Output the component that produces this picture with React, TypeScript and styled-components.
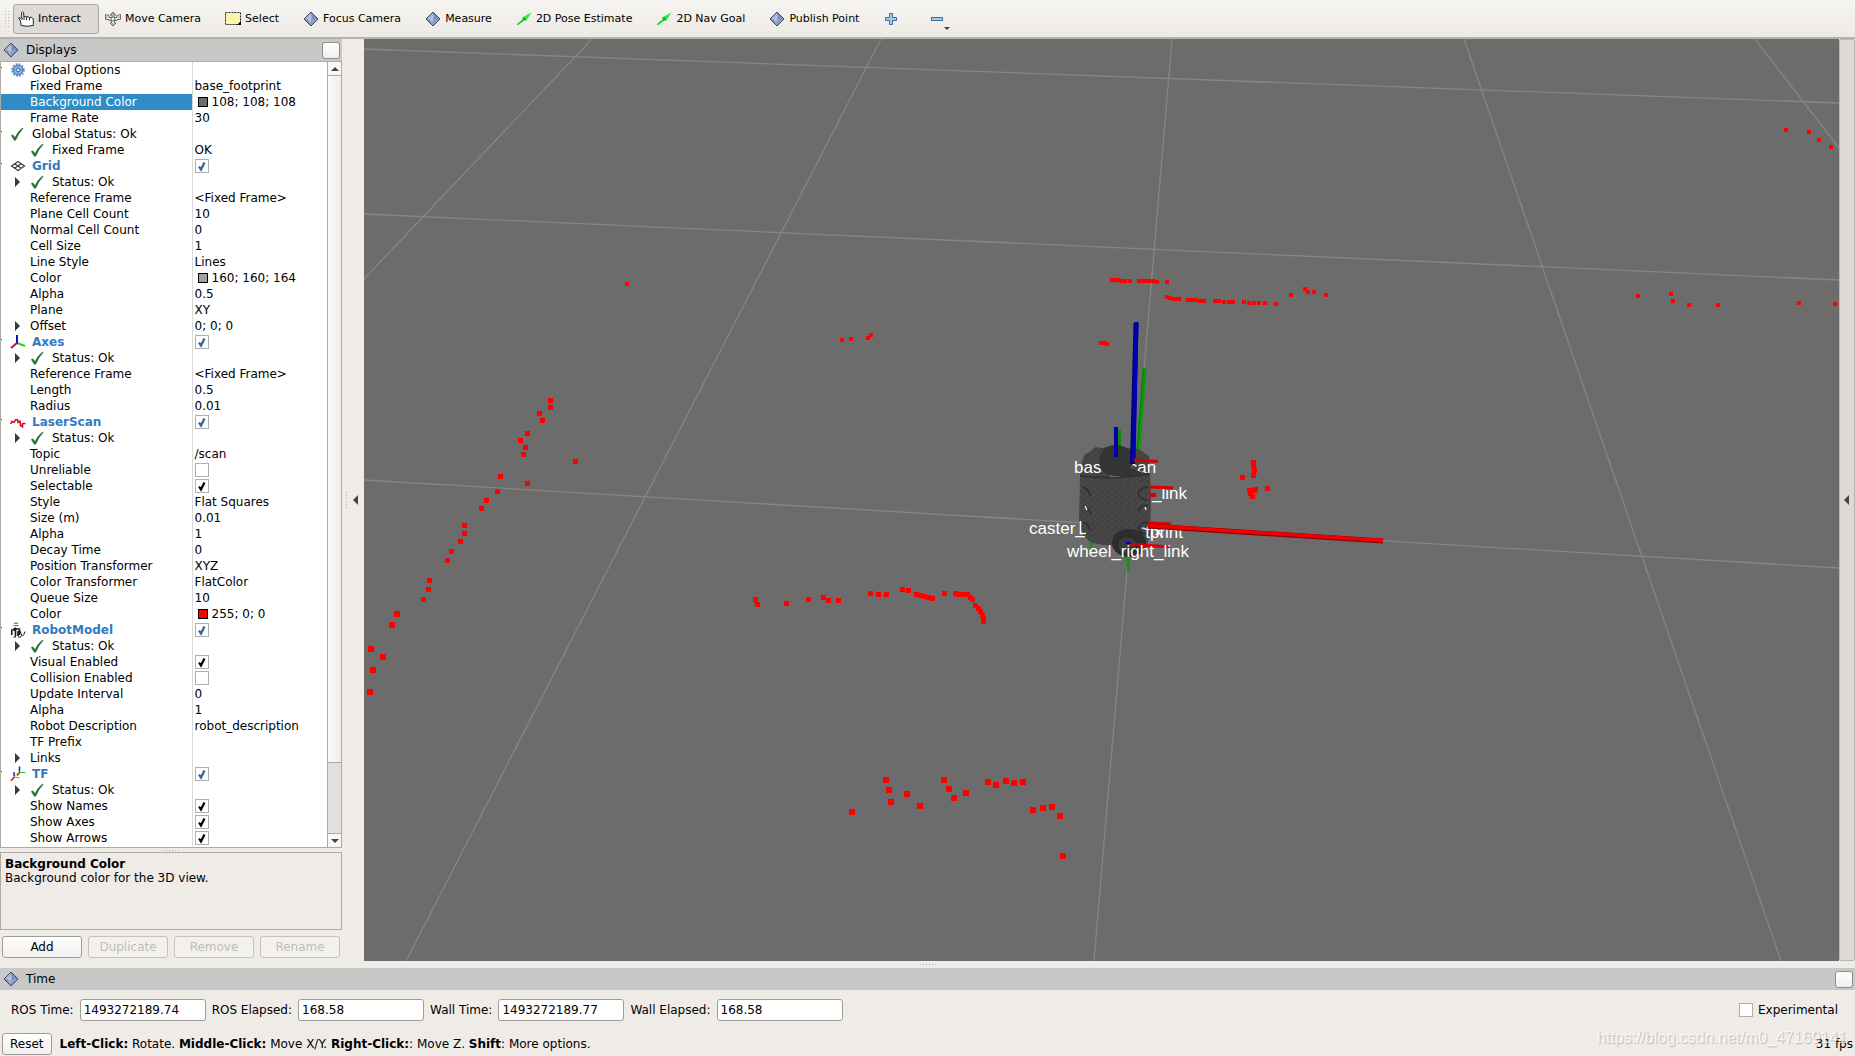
import React, { useState } from "react";
import styled, { createGlobalStyle } from "styled-components";

const UI_FONT = '"DejaVu Sans", "Noto Sans", sans-serif';
const LABEL_FONT = '"Liberation Sans", Arial, sans-serif';

const GlobalStyle = createGlobalStyle`
  *, *::before, *::after { box-sizing: border-box; }
  body { margin: 0; background: #efebe7; }
`;

const Window = styled.div`
  display: flex;
  flex-direction: column;
  height: 100vh;
  overflow: hidden;
  position: relative;
  background: #efece7;
  color: #000;
  font: 12px/16px ${UI_FONT};
`;

/* ---------- toolbar ---------- */

const Toolbar = styled.header`
  display: flex;
  align-items: center;
  gap: 1px;
  height: 39px;
  padding: 1px 4px 0;
  flex: none;
  background: linear-gradient(#f7f5f2, #edeae5);
  border-bottom: 2px solid #b4b2ae;
`;

const Grip = styled.span<{ $w: number; $h: number }>`
  width: ${(p) => p.$w}px;
  height: ${(p) => p.$h}px;
  flex: none;
  background-image: radial-gradient(circle, #b5b2ae 0 1px, transparent 1px);
  background-size: 3px 3px;
`;

const Tool = styled.button<{ $active?: boolean; $wide?: boolean }>`
  display: flex;
  align-items: center;
  gap: 4px;
  height: 30px;
  padding: 0 ${(p) => (p.$wide ? 23 : 17)}px 0 4px;
  border: 1px solid ${(p) => (p.$active ? "#a9a6a2" : "transparent")};
  border-radius: 3px;
  background: ${(p) => (p.$active ? "#dcd9d6" : "none")};
  color: #000;
  font: 11px/16px ${UI_FONT};
  white-space: nowrap;
`;

const ToolGrip = styled.span`
  display: flex;
  width: 8px;
`;

const MinusIcon = styled.span`
  position: relative;
  display: flex;
  svg + svg {
    position: absolute;
    left: 15px;
    top: 16px;
  }
`;

/* ---------- docks ---------- */

const Main = styled.div`
  display: flex;
  flex: 1;
  min-height: 0;
`;

const Dock = styled.aside`
  display: flex;
  flex-direction: column;
  width: 342px;
  flex: none;
  padding-bottom: 3px;
`;

const DockHeader = styled.div`
  display: flex;
  align-items: center;
  gap: 7px;
  height: 22px;
  flex: none;
  padding: 0 2px 0 3px;
  background: #c8c8c8;
`;

const DockTitle = styled.h2`
  flex: 1;
  margin: 0;
  font: inherit;
`;

const DockButton = styled.button`
  width: 18px;
  height: 17px;
  padding: 0;
  border: 1px solid #8f8d8a;
  border-radius: 3px;
  background: linear-gradient(#fff, #f1efed);
`;

const TreeFrame = styled.div`
  display: flex;
  flex: 1;
  min-height: 0;
  overflow: hidden;
  border: 1px solid #aeaba7;
  background: #fff;
`;

const Tree = styled.table`
  flex: 1;
  align-self: flex-start;
  table-layout: fixed;
  border-collapse: collapse;
  width: 325px;
`;

const NameCell = styled.th<{ $selected?: boolean; $group?: boolean }>`
  width: 191px;
  height: 16px;
  padding: 0;
  text-align: left;
  white-space: nowrap;
  border-right: 1px solid #d9d9d9;
  font-weight: ${(p) => (p.$group ? 700 : 400)};
  color: ${(p) => (p.$selected ? "#fff" : p.$group ? "#307bc0" : "#000")};
  background: ${(p) => (p.$selected ? "#308cc6" : "#fff")};
`;

const ValueCell = styled.td`
  height: 16px;
  padding: 0 0 0 2px;
  white-space: nowrap;
`;

const NameRow = styled.div<{ $kind: Kind }>`
  display: flex;
  align-items: center;
  height: 16px;
  padding-left: ${(p) => (p.$kind === "top" ? 0 : 12)}px;
`;

const Branch = styled.span<{ $top?: boolean }>`
  display: flex;
  width: ${(p) => (p.$top ? 9 : 17)}px;
  flex: none;
`;

const IconSlot = styled.span`
  display: flex;
  width: 22px;
  flex: none;
`;

const Swatch = styled.span<{ $color: string }>`
  display: inline-block;
  width: 10px;
  height: 10px;
  margin: 0 4px 0 3px;
  vertical-align: -1px;
  border: 1px solid #000;
  background: ${(p) => p.$color};
`;

const TickLabel = styled.label`
  display: grid;
  width: max-content;
  align-items: center;
  & > * {
    grid-area: 1 / 1;
  }
  svg {
    pointer-events: none;
  }
`;

const TickBox = styled.input`
  appearance: none;
  width: 14px;
  height: 14px;
  margin: 0;
  border: 1px solid #b1afac;
  background: #fff;
`;

const ScrollBar = styled.div`
  display: flex;
  flex-direction: column;
  width: 14px;
  flex: none;
  border-left: 1px solid #aeaba7;
  background: #e2e1df;
`;

const ScrollButton = styled.button<{ $down?: boolean }>`
  display: grid;
  place-items: center;
  height: 14px;
  flex: none;
  padding: 0;
  border: 0;
  border-${(p) => (p.$down ? "top" : "bottom")}: 1px solid #aeaba7;
  background: #f8f7f6;
`;

const Thumb = styled.div`
  flex: 687;
  border-bottom: 1px solid #aeaba7;
  background: linear-gradient(90deg, #fcfbfb, #f0eeeb);
`;

const Trough = styled.div`
  flex: 70;
`;

const Splitter = styled.div<{ $h: number }>`
  display: flex;
  justify-content: center;
  align-items: center;
  height: ${(p) => p.$h}px;
  flex: none;
`;

const Description = styled.section`
  height: 78px;
  flex: none;
  padding: 4px;
  border: 1px solid #aeaba7;
  line-height: 14px;
  p { margin: 0; }
`;

const ButtonRow = styled.div`
  display: grid;
  grid-template-columns: repeat(4, 1fr);
  gap: 6px;
  padding: 6px 2px 0;
`;

const PushButton = styled.button`
  height: 22px;
  padding: 0 7px;
  border: 1px solid #a09d99;
  border-radius: 3px;
  background: linear-gradient(#fff, #f2f0ee);
  color: #000;
  font: inherit;
  &:disabled {
    border-color: #c5c2be;
    background: #f3f1ee;
    color: #bebcb9;
  }
`;

const Gutter = styled.div`
  display: flex;
  align-items: center;
  gap: 5px;
  width: 22px;
  flex: none;
  padding-left: 3px;
`;

const Collapse = styled.button`
  padding: 0;
  border: 0;
  background: none;
  display: flex;
`;

const RightStrip = styled.button`
  display: flex;
  align-items: center;
  justify-content: center;
  width: 16px;
  flex: none;
  padding: 0 2px 0 0;
  border: 1px solid #b9b6b2;
  border-radius: 2px;
  background: #dcd9d6;
`;

const View = styled.main`
  flex: 1;
  min-width: 0;
  background: #6c6c6c;
  svg {
    display: block;
    width: 100%;
    height: 100%;
  }
`;

const SceneLabel = styled.text`
  font: 17px ${LABEL_FONT};
  fill: #fff;
`;

/* ---------- bottom ---------- */

const TimeRow = styled.div`
  display: flex;
  align-items: center;
  gap: 6px;
  padding: 9px 17px 12px 11px;
  flex: none;
`;

const TimeField = styled.input`
  width: 126px;
  height: 22px;
  padding: 0 3px;
  border: 1px solid #a09d99;
  border-radius: 3px;
  background: #fff;
  font: inherit;
`;

const Experimental = styled.label`
  display: flex;
  align-items: center;
  gap: 5px;
  margin-left: auto;
`;

const StatusRow = styled.footer`
  display: flex;
  align-items: center;
  gap: 8px;
  padding: 0 2px 1px;
  flex: none;
`;

const Fps = styled.span`
  margin-left: auto;
`;

const Watermark = styled.span`
  position: absolute;
  right: 8px;
  bottom: 9px;
  font: 16px/18px ${LABEL_FONT};
  color: rgba(255, 255, 255, 0.75);
  text-shadow: 1px 1px 1px rgba(0, 0, 0, 0.22);
  pointer-events: none;
`;

/* ---------- icons ---------- */

const Diamond = () => (
  <svg width="16" height="16" viewBox="0 0 16 16">
    <path d="M8 1 L15 8 L8 15 L1 8Z" fill="#8fa0c6" />
    <path d="M8 1 L8 8 L1 8Z" fill="#a9b7d6" />
    <path d="M8 1 L15 8 L8 8Z" fill="#7c8db6" />
    <path d="M1 8 L8 15 L6 9Z" fill="#8193be" />
    <path d="M5 7 L9 4 L8 10 L6 12Z" fill="#c0cbe2" opacity="0.7" />
    <path d="M8 1 L15 8 L8 15 L1 8Z" fill="none" stroke="#3b4668" />
  </svg>
);

const Hand = () => (
  <svg width="16" height="16" viewBox="0 0 16 16">
    <path
      d="M3 14.5 L2.5 10 L.6 7 Q1 5.800 2.500 7 L4 8.500 L3.500 1.500 Q4.500 0 5.500 1.500 L6 6 Q7 4.800 8.500 6 Q10 5 11.500 6.500 Q13 5.500 14.500 7 L15.300 8 L15.300 14.500 Q9 16 3 14.500Z"
      fill="#fff"
      stroke="#222"
    />
    <path d="M8.500 6v3M11.500 6.500v3M6 6v3" stroke="#222" />
  </svg>
);

const Move = () => (
  <svg width="16" height="16" viewBox="0 0 16 16" fill="#f4f2ef" stroke="#4b4b4b">
    <path d="M8 1 L11 4 H9V6.500 H12V4.500 L15.500 3.500 V8.500 L12 8.500 V9.500 H9.500V12 H11 L8 15 L5 12 H6.500V9.500 H4V8.500 L.5 8.500V3.500 L4 4.500 V6.500 H7V4 H5Z" strokeWidth="0.8" />
    <circle cx="8" cy="8" r="2" strokeWidth="0.8" />
    <path d="M2 5.500v1.500M14 5.500v1.500M7 13h2M7 3h2" strokeWidth="0.8" />
  </svg>
);

const SelectIcon = () => (
  <svg width="16" height="16" viewBox="0 0 16 16">
    <rect x="0.500" y="1.500" width="15" height="12" fill="#fbf3b0" stroke="#222" strokeDasharray="2 1" />
    <path d="M16 10v4h-4z" fill="#000" />
  </svg>
);

const GreenArrow = () => (
  <svg width="16" height="16" viewBox="0 0 16 16">
    <path d="M.5 13.500 L7 7.500 L6 6.500 L15.500 1.500 L10 10 L8.800 9 L2 14Z" fill="#1ff03c" />
    <path d="M1 13.500 L8 7.800 L9 9 L2 14Z" fill="#0fae26" opacity="0.5" />
    <path d="M6 6.500 L9 7 L10 10Z" fill="#0b8f20" />
  </svg>
);

const Plus = () => (
  <svg width="16" height="16" viewBox="0 0 16 16">
    <path d="M6.500 2.500h3v4h4v3h-4v4h-3v-4h-4v-3h4z" fill="#a8c8ec" stroke="#3d6ba8" />
  </svg>
);

const Minus = () => (
  <svg width="16" height="16" viewBox="0 0 16 16">
    <rect x="2.500" y="6.500" width="11" height="3" fill="#a8c8ec" stroke="#3d6ba8" />
  </svg>
);

const ArrowTri = ({ dir, size = 4 }: { dir: "up" | "down" | "left" | "right"; size?: number }) => {
  const s = size;
  const shape = {
    up: `0,${s} ${2 * s},${s} ${s},0`,
    down: `0,0 ${2 * s},0 ${s},${s}`,
    left: `${s},0 ${s},${2 * s} 0,${s}`,
    right: `0,0 0,${2 * s} ${s},${s}`,
  }[dir];
  const flat = dir === "up" || dir === "down";
  return (
    <svg width={flat ? 2 * s : s} height={flat ? s : 2 * s}>
      <polygon points={shape} fill="#444" />
    </svg>
  );
};

const Expander = () => (
  <svg width="17" height="16">
    <polygon points="2,3 2,13 7,8" fill="#3a3a3a" />
  </svg>
);

const Check = () => (
  <svg width="14" height="14" viewBox="0 0 14 14">
    <path d="M1 8.500 L2.800 7.500 L5 10.200 Q8 4 12.800 0.800 L13.500 1.300 Q8.800 6.500 5.800 13.500 L4.200 13.500Z" fill="#237532" />
  </svg>
);

const Gear = () => (
  <svg width="16" height="16" viewBox="0 0 16 16">
    <circle cx="8" cy="8" r="5.500" fill="none" stroke="#5e8dc9" strokeWidth="2.500" strokeDasharray="1.700 1.180" />
    <circle cx="8" cy="8" r="4.800" fill="#8fb4e3" stroke="#4674b2" />
    <circle cx="8" cy="8" r="1.800" fill="#d5e4f6" stroke="#3f6cab" />
    <path d="M8 3.500v2M8 10.500v2M3.500 8h2M10.500 8h2" stroke="#5b88c2" />
  </svg>
);

const GridIcon = () => (
  <svg width="16" height="16" viewBox="0 0 16 16" fill="none" stroke="#3c3c3c" strokeWidth="1.200">
    <path d="M8 3.500 L14.500 8 L8 12.500 L1.500 8Z M4.700 5.800 L11.200 10.300 M11.200 5.800 L4.700 10.300" />
  </svg>
);

const AxesIcon = () => (
  <svg width="16" height="16" viewBox="0 0 16 16" strokeWidth="2">
    <path d="M7 9 L15 12" stroke="#24d624" />
    <path d="M7 9 L1 14" stroke="#c8102e" />
    <path d="M7 1 V9.500" stroke="#1010c0" />
  </svg>
);

const LaserIcon = () => (
  <svg width="16" height="16" viewBox="0 0 16 16">
    <path d="M.8 10 L1.800 7.500 L4.200 8.300 L5.500 5.800 L7.500 5.800 L8 8.200 L10 7.200 L10.500 11.500 L12.500 12.800 L12.500 9.800 L15.500 9.500" fill="none" stroke="#d90f14" strokeWidth="1.600" />
  </svg>
);

const RobotIcon = () => (
  <svg width="16" height="16" viewBox="0 0 16 16" fill="none" stroke="#1d1d1d">
    <path d="M3.500 3.500h5M4 1.300h4" stroke="#5b5f70" />
    <path d="M1.800 7v6M4 6v3M5.500 5.500v9M5.500 7h4v6M8 9v5" strokeWidth="1.600" />
    <path d="M10 9l2 5M12 14.500q2-1 3-5M3.500 15h2.500M8 15h3" />
  </svg>
);

const TfIcon = () => (
  <svg width="16" height="16" viewBox="0 0 16 16" fill="none" strokeWidth="1.500">
    <path d="M4.500 11 L.8 14.800 M10 6 L7 9.500" stroke="#d01020" />
    <path d="M4 6 V10.500 M9.500 0.500 V5.500" stroke="#2020b0" />
    <path d="M10 6.500 L15.500 6.500 M4.500 11 L9.500 12" stroke="#28c828" strokeWidth="1.200" />
    <path d="M9 5 L5 10" stroke="#d8c020" strokeWidth="0.800" />
  </svg>
);

/* ---------- property tree data ---------- */

type Kind = "top" | "status" | "prop";

interface Row {
  kind: Kind;
  name: string;
  icon?: React.ReactNode;
  group?: boolean;
  expand?: boolean;
  selected?: boolean;
  value?: string;
  swatch?: string;
  check?: boolean;
}

const prop = (name: string, value?: string | boolean, extra: Partial<Row> = {}): Row => ({
  kind: "prop",
  name,
  ...(typeof value === "boolean" ? { check: value } : { value }),
  ...extra,
});
const group = (name: string, icon: React.ReactNode): Row => ({ kind: "top", name, icon, group: true, check: true });
const statusOk: Row = { kind: "status", name: "Status: Ok", icon: <Check />, expand: true };

const rows: Row[] = [
  { kind: "top", name: "Global Options", icon: <Gear /> },
  prop("Fixed Frame", "base_footprint"),
  prop("Background Color", "108; 108; 108", { swatch: "#6c6c6c", selected: true }),
  prop("Frame Rate", "30"),
  { kind: "top", name: "Global Status: Ok", icon: <Check /> },
  { kind: "status", name: "Fixed Frame", icon: <Check />, value: "OK" },
  group("Grid", <GridIcon />),
  statusOk,
  prop("Reference Frame", "<Fixed Frame>"),
  prop("Plane Cell Count", "10"),
  prop("Normal Cell Count", "0"),
  prop("Cell Size", "1"),
  prop("Line Style", "Lines"),
  prop("Color", "160; 160; 164", { swatch: "#a0a0a4" }),
  prop("Alpha", "0.5"),
  prop("Plane", "XY"),
  prop("Offset", "0; 0; 0", { expand: true }),
  group("Axes", <AxesIcon />),
  statusOk,
  prop("Reference Frame", "<Fixed Frame>"),
  prop("Length", "0.5"),
  prop("Radius", "0.01"),
  group("LaserScan", <LaserIcon />),
  statusOk,
  prop("Topic", "/scan"),
  prop("Unreliable", false),
  prop("Selectable", true),
  prop("Style", "Flat Squares"),
  prop("Size (m)", "0.01"),
  prop("Alpha", "1"),
  prop("Decay Time", "0"),
  prop("Position Transformer", "XYZ"),
  prop("Color Transformer", "FlatColor"),
  prop("Queue Size", "10"),
  prop("Color", "255; 0; 0", { swatch: "#ff0000" }),
  group("RobotModel", <RobotIcon />),
  statusOk,
  prop("Visual Enabled", true),
  prop("Collision Enabled", false),
  prop("Update Interval", "0"),
  prop("Alpha", "1"),
  prop("Robot Description", "robot_description"),
  prop("TF Prefix"),
  prop("Links", undefined, { expand: true }),
  group("TF", <TfIcon />),
  statusOk,
  prop("Show Names", true),
  prop("Show Axes", true),
  prop("Show Arrows", true),
];

const Tick = ({ on, blue, label }: { on: boolean; blue?: boolean; label: string }) => {
  const [checked, setChecked] = useState(on);
  return (
    <TickLabel>
      <TickBox type="checkbox" aria-label={label} checked={checked} onChange={() => setChecked(!checked)} />
      {checked && (
        <svg width="14" height="14" viewBox="0 0 14 14">
          <path d="M4 7.500 L6 10.500 L9.500 3.500" fill="none" stroke={blue ? "#2c5f9e" : "#000"} strokeWidth="2.200" />
        </svg>
      )}
    </TickLabel>
  );
};

const TreeRow = ({ row }: { row: Row }) => (
  <tr>
    <NameCell scope="row" $selected={row.selected} $group={row.group}>
      <NameRow $kind={row.kind}>
        <Branch $top={row.kind === "top"}>
          {row.expand && <Expander />}
          {row.kind === "top" && (
            <svg width="9" height="16">
              <rect x="0" y="5" width="1" height="1" fill="#333" />
            </svg>
          )}
        </Branch>
        {row.icon && <IconSlot>{row.icon}</IconSlot>}
        {row.name}
      </NameRow>
    </NameCell>
    <ValueCell>
      {row.check !== undefined && <Tick on={row.check} blue={row.group} label={row.name} />}
      {row.swatch && <Swatch $color={row.swatch} />}
      {row.value}
    </ValueCell>
  </tr>
);

/* ---------- 3D scene ---------- */

const gridLines = [
  [364, 49, 1839, 103],
  [364, 214, 1839, 280],
  [364, 480, 1839, 568],
  [592, 39, 364, 279],
  [881, 39, 406, 961],
  [1172, 39, 1094, 961],
  [1464, 39, 1781, 961],
  [1755, 39, 1839, 148],
];

/* centre x, centre y of each laser return, grouped by drawn size */
const laser: { size: number; points: number[][] }[] = [
  {
    size: 4,
    points: [
      [1786, 130], [1809, 132], [1819, 140], [1831, 147],
      [627, 284], [842, 340], [851, 339], [868, 338], [871, 335],
      [1112, 280], [1115, 280], [1118, 280], [1121, 281], [1125, 281], [1130, 281],
      [1139, 281], [1143, 281], [1146, 281], [1149, 281], [1153, 281], [1157, 282], [1167, 282],
      [1167, 297], [1170, 298], [1173, 299], [1176, 299], [1179, 299],
      [1188, 300], [1192, 300], [1196, 300], [1200, 301], [1204, 301],
      [1215, 301], [1219, 301], [1224, 302], [1229, 302], [1233, 302],
      [1244, 302], [1249, 303], [1254, 303], [1259, 303], [1265, 303], [1276, 304],
      [1291, 295], [1305, 289], [1308, 292], [1314, 292], [1326, 295],
      [1101, 343], [1104, 343], [1107, 344],
      [1638, 296], [1671, 294], [1673, 301], [1689, 305], [1718, 305], [1799, 303], [1835, 304],
    ],
  },
  {
    size: 5,
    points: [
      [550, 400], [550, 407], [539, 413], [542, 420], [527, 433], [520, 440], [525, 447], [523, 454],
      [575, 461], [500, 476], [527, 483], [497, 491], [486, 500], [481, 508], [464, 525], [464, 533],
      [460, 541], [451, 551], [447, 560], [429, 580], [428, 589], [423, 599],
      [1242, 477], [1267, 488], [1253, 462], [1253, 466], [1254, 470], [1253, 475],
      [1249, 490], [1254, 490], [1250, 493], [1252, 496], [1255, 489],
      [755, 599], [757, 604], [786, 603], [808, 599], [823, 597], [828, 600], [838, 600],
      [870, 593], [878, 594], [886, 594], [902, 589], [908, 590], [916, 594], [920, 595], [924, 596],
      [928, 597], [932, 598], [944, 593], [955, 593], [958, 594], [962, 594], [967, 594],
      [970, 597], [972, 599], [975, 605], [978, 608], [980, 611], [982, 615], [983, 619], [983, 621],
    ],
  },
  {
    size: 6,
    points: [
      [397, 614], [392, 625], [371, 649], [383, 657], [373, 670], [370, 692],
      [852, 812], [886, 780], [889, 790], [891, 802], [907, 794], [920, 806],
      [944, 780], [949, 789], [954, 798], [966, 793], [988, 782], [996, 785], [1006, 781], [1014, 783],
      [1023, 782], [1033, 810], [1043, 808], [1052, 807], [1060, 816], [1063, 856],
    ],
  },
];

const Scene = () => (
  <svg viewBox="364 39 1475 922" preserveAspectRatio="xMidYMid slice" role="img" aria-label="3D view">
    <defs>
      <pattern id="hull" width="7" height="6" patternUnits="userSpaceOnUse">
        <rect width="7" height="6" fill="#464646" />
        <path d="M1 0v3M4 2v4M6 1v2M0 5h4" stroke="#3f3f3f" strokeWidth="1" />
        <path d="M2 3h2M5 5h2" stroke="#4f4f4f" strokeWidth="1" />
      </pattern>
    </defs>
    <g stroke="#868686" strokeWidth="1.300">
      {gridLines.map(([x1, y1, x2, y2], i) => (
        <line key={i} x1={x1} y1={y1} x2={x2} y2={y2} />
      ))}
    </g>
    <g fill="#f00" shapeRendering="crispEdges">
      {laser.map(({ size, points }) =>
        points.map(([x, y], i) => (
          <rect key={`${size}-${i}`} x={x - Math.floor(size / 2)} y={y - Math.floor(size / 2)} width={size} height={size} />
        )),
      )}
    </g>

    <path d="M1144.500 368 L1138 452" stroke="#0b9a0b" strokeWidth="4" />
    <path d="M1143.500 368 L1137 452" stroke="#0a7d0a" strokeWidth="1" />
    <path d="M1119.500 430 V448" stroke="#0b8a0b" strokeWidth="3" />
    <path d="M1090 538 L1091 549 M1128 556 L1128.500 572" stroke="#0b9a0b" strokeWidth="3" />

    {/* robot body */}
    <path
      d="M1080 478 L1081 464 L1085 454 L1090 452 L1095 447 L1103 448 L1110 446 L1137 449 L1142 451 L1149 456 L1150 468 L1151 500 L1150 535 L1146 547 L1110 546 L1092 543 L1083 536 L1079 520Z"
      fill="url(#hull)"
    />
    <path d="M1080 476 Q1115 480 1149 474" fill="none" stroke="#333" strokeWidth="2" />
    <g fill="none" stroke="#2c2c2c" strokeWidth="1.500">
      <path d="M1083 487q6 2 7 9M1083 506q7 2 8 9M1083 522q6 2 7 9M1148 487q-9 1-10 7q3 6 9 6M1148 505q-8 1-10 6M1148 522q-8 1-10 7q3 5 9 5" />
    </g>
    <path d="M1085 506l2 4M1145 507l1 3M1142 528l4 1" stroke="#ddd" strokeWidth="1.500" />

    <SceneLabel x="1029" y="534">caster_</SceneLabel>
    <path d="M1080.500 521 V533.500 H1086" fill="none" stroke="#fff" strokeWidth="1.500" />
    <SceneLabel x="1183" y="538" textAnchor="end">tprint</SceneLabel>
    <path d="M1152 527 V537 M1156 530 L1163 537 M1160 530 L1156 535" stroke="#fff" strokeWidth="1.500" />
    <SceneLabel x="1187" y="499" textAnchor="end">_link</SceneLabel>
    <SceneLabel x="1074" y="473">base_scan</SceneLabel>

    {/* lidar */}
    <path d="M1099 463 Q1100 445 1116 445 Q1134 447 1135 460 L1131 468 L1146 474 L1128 477 L1112 476 Q1100 474 1099 463Z" fill="#343434" />

    {/* wheel */}
    <ellipse cx="1129" cy="543" rx="17" ry="14" fill="#2e2e2e" />
    <ellipse cx="1127" cy="545" rx="10" ry="9" fill="#3a3a3a" stroke="#222" />

    <path d="M1136 323 L1132.500 464" stroke="#000070" strokeWidth="5" />
    <path d="M1136.500 322 L1133.500 462" stroke="#0000ae" strokeWidth="4" />
    <path d="M1116 427 V457" stroke="#0000a6" strokeWidth="4" />

    <g stroke="#d80000" strokeWidth="3">
      <path d="M1134 460 L1158 461.500" />
      <path d="M1150 487 L1173 488" />
      <path d="M1149 495 L1156 495" strokeWidth="4" />
      <path d="M1148 523 L1171 524" />
      <path d="M1129 544 L1170 547" />
    </g>
    <path d="M1148 526 L1383 541" stroke="#8d0000" strokeWidth="5" />
    <path d="M1148 525.500 L1383 540.500" stroke="#f00000" strokeWidth="3.500" />
    <path d="M1126 543h5" stroke="#0000c0" strokeWidth="2" />
    <path d="M1128 547v8" stroke="#0b9a0b" strokeWidth="2" />

    <SceneLabel x="1067" y="557">wheel_right_link</SceneLabel>
  </svg>
);

/* ---------- application ---------- */

const tools: { name: string; icon: React.ReactNode }[] = [
  { name: "Interact", icon: <Hand /> },
  { name: "Move Camera", icon: <Move /> },
  { name: "Select", icon: <SelectIcon /> },
  { name: "Focus Camera", icon: <Diamond /> },
  { name: "Measure", icon: <Diamond /> },
  { name: "2D Pose Estimate", icon: <GreenArrow /> },
  { name: "2D Nav Goal", icon: <GreenArrow /> },
  { name: "Publish Point", icon: <Diamond /> },
];

const times = [
  { id: "ros-time", label: "ROS Time:", value: "1493272189.74" },
  { id: "ros-elapsed", label: "ROS Elapsed:", value: "168.58" },
  { id: "wall-time", label: "Wall Time:", value: "1493272189.77" },
  { id: "wall-elapsed", label: "Wall Elapsed:", value: "168.58" },
];

export default function App() {
  const [active, setActive] = useState("Interact");
  return (
    <Window>
      <GlobalStyle />
      <Toolbar>
        <ToolGrip>
          <Grip $w={6} $h={18} />
        </ToolGrip>
        {tools.map((t) => (
          <Tool key={t.name} $active={active === t.name} onClick={() => setActive(t.name)}>
            {t.icon}
            {t.name}
          </Tool>
        ))}
        <Tool $wide aria-label="Add tool">
          <Plus />
        </Tool>
        <Tool $wide aria-label="Remove tool">
          <MinusIcon>
            <Minus />
            <ArrowTri dir="down" size={3} />
          </MinusIcon>
        </Tool>
      </Toolbar>

      <Main>
        <Dock>
          <DockHeader>
            <Diamond />
            <DockTitle>Displays</DockTitle>
            <DockButton aria-label="Close displays" />
          </DockHeader>
          <TreeFrame>
            <Tree>
              <tbody>
                {rows.map((row, i) => (
                  <TreeRow key={i} row={row} />
                ))}
              </tbody>
            </Tree>
            <ScrollBar>
              <ScrollButton aria-label="Scroll up">
                <ArrowTri dir="up" />
              </ScrollButton>
              <Thumb />
              <Trough />
              <ScrollButton $down aria-label="Scroll down">
                <ArrowTri dir="down" />
              </ScrollButton>
            </ScrollBar>
          </TreeFrame>
          <Splitter $h={4}>
            <Grip $w={18} $h={3} />
          </Splitter>
          <Description>
            <p>
              <b>Background Color</b>
            </p>
            <p>Background color for the 3D view.</p>
          </Description>
          <ButtonRow>
            <PushButton>Add</PushButton>
            <PushButton disabled>Duplicate</PushButton>
            <PushButton disabled>Remove</PushButton>
            <PushButton disabled>Rename</PushButton>
          </ButtonRow>
        </Dock>
        <Gutter>
          <Grip $w={3} $h={18} />
          <Collapse aria-label="Hide left dock">
            <ArrowTri dir="left" size={5} />
          </Collapse>
        </Gutter>
        <View>
          <Scene />
        </View>
        <RightStrip aria-label="Show right dock">
          <ArrowTri dir="left" size={5} />
        </RightStrip>
      </Main>

      <Splitter $h={7}>
        <Grip $w={18} $h={3} />
      </Splitter>
      <DockHeader>
        <Diamond />
        <DockTitle>Time</DockTitle>
        <DockButton aria-label="Close time" />
      </DockHeader>
      <TimeRow>
        {times.map((t) => (
          <React.Fragment key={t.id}>
            <label htmlFor={t.id}>{t.label}</label>
            <TimeField id={t.id} defaultValue={t.value} readOnly />
          </React.Fragment>
        ))}
        <Experimental>
          <TickBox type="checkbox" />
          Experimental
        </Experimental>
      </TimeRow>
      <StatusRow>
        <PushButton>Reset</PushButton>
        <span>
          <b>Left-Click:</b> Rotate. <b>Middle-Click:</b> Move X/Y. <b>Right-Click:</b>: Move Z. <b>Shift</b>: More
          options.
        </span>
        <Fps>31 fps</Fps>
      </StatusRow>
      <Watermark>https://blog.csdn.net/m0_47169141</Watermark>
    </Window>
  );
}
